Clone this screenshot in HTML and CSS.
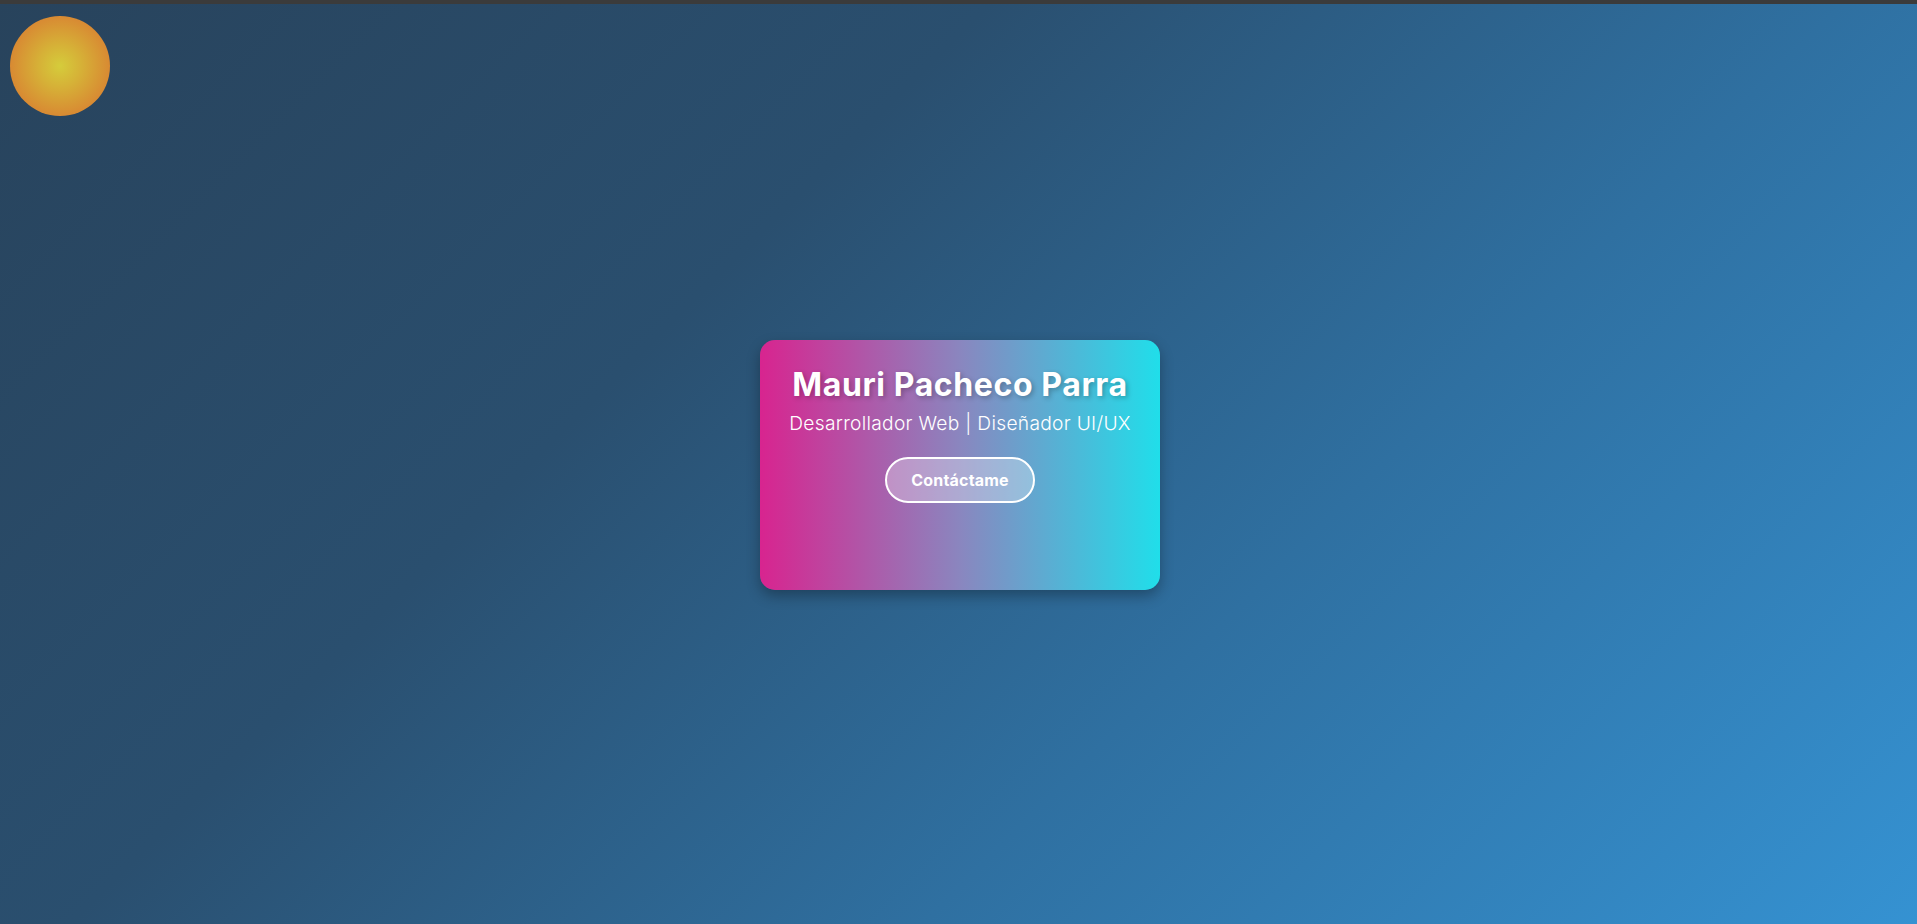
FILE: index.html
```html
<!DOCTYPE html>
<html lang="es">
<head>
<meta charset="utf-8">
<title>Mauri Pacheco Parra</title>
<link rel="stylesheet" href="styles.css">
</head>
<body>
<div class="topbar"></div>
<div class="sun"></div>
<main class="stage">
  <section class="card">
    <h1 class="name">Mauri Pacheco Parra</h1>
    <p class="role">Desarrollador Web | Diseñador UI/UX</p>
    <a class="contact" href="#">Contáctame</a>
  </section>
</main>
</body>
</html>
```
FILE: styles.css
```css
html, body {
  margin: 0;
  padding: 0;
  height: 100%;
}
body {
  display: flex;
  flex-direction: column;
  font-family: Inter, "Noto Sans", sans-serif;
  color: #fff;
  background: linear-gradient(135deg, #28435c 0%, #2a4f6f 35%, #2f70a1 65%, #3592d2 100%);
  overflow: hidden;
}
.topbar {
  height: 4px;
  background: #3b3b3b;
  flex: none;
}
.sun {
  position: absolute;
  left: 10px;
  top: 16px;
  width: 100px;
  height: 100px;
  border-radius: 50%;
  background: radial-gradient(circle at 50% 50%, #d5cc3b 0%, #d6b137 30%, #d88c33 68%, #d97630 100%);
}
.stage {
  flex: 1;
  display: flex;
  align-items: center;
  justify-content: center;
  padding-left: 3px;
  padding-top: 2px;
}
.card {
  box-sizing: border-box;
  width: 400px;
  height: 250px;
  padding: 25px 20px 0;
  border-radius: 15px;
  background: linear-gradient(90deg, #d8248f 0%, #8a86bf 50%, #20deea 100%);
  box-shadow: 0 6px 14px rgba(0, 0, 0, 0.3);
  text-align: center;
}
.name {
  margin: 0;
  font-size: 32px;
  line-height: 40px;
  font-weight: 700;
  letter-spacing: 0.6px;
  text-shadow: 2px 2px 5px rgba(0, 0, 0, 0.25);
}
.role {
  margin: 6px 0 0;
  font-size: 19.2px;
  line-height: 24px;
  font-weight: 300;
  letter-spacing: 0.3px;
}
.contact {
  display: inline-block;
  box-sizing: border-box;
  margin-top: 22px;
  height: 46px;
  padding: 0 24px;
  line-height: 42px;
  border: 2px solid #fff;
  border-radius: 25px;
  background: rgba(255, 255, 255, 0.3);
  color: #fff;
  font-size: 16px;
  font-weight: 700;
  letter-spacing: 0.2px;
  text-decoration: none;
}
```
